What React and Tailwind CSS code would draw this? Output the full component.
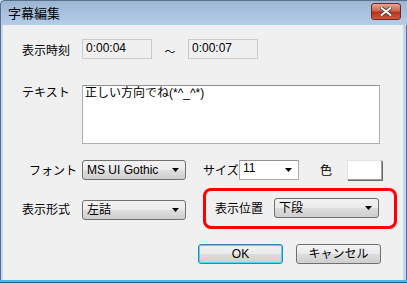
import React from 'react';

const FONT = "font-['Liberation_Sans','Noto_Sans_CJK_JP',sans-serif]";

const Arrow = () => (
  <svg width="7" height="4" viewBox="0 0 7 4" className="shrink-0">
    <path d="M0 0h7L3.5 4z" fill="#000" />
  </svg>
);

const Combo = ({ value, className = '' }) => (
  <div
    className={`flex items-center justify-between h-[20px] pl-[4px] pr-[6px] border border-[#707070] rounded-[3px] bg-[linear-gradient(#f2f2f2,#ebebeb_50%,#dddddd_50%,#cfcfcf)] ${className}`}
  >
    <span className="leading-none">{value}</span>
    <Arrow />
  </div>
);

const TimeBox = ({ value }) => (
  <div className="w-[70px] h-[20px] border border-[#c9ccd1] bg-[#f0f0f0] px-[3px] pt-[2px] leading-none">
    {value}
  </div>
);

const Button = ({ children, primary }) => (
  <button
    className={`w-[85px] h-[20px] rounded-[3px] border leading-none bg-[linear-gradient(#f2f2f2,#ebebeb_50%,#dddddd_50%,#cfcfcf)] ${
      primary ? 'border-[#3c7fb1] shadow-[inset_0_0_0_1px_#48d8fb]' : 'border-[#707070]'
    }`}
  >
    {children}
  </button>
);

export default function App() {
  return (
    <div className={`w-[407px] h-[283px] flex flex-col text-[12px] text-black ${FONT} bg-[#c2d7ef]`}>
      {/* title bar */}
      <div className="h-[25px] flex items-center justify-between pl-[7px] pr-[6px] bg-[linear-gradient(#9cb5d3,#b4cde9)] border-t border-l border-[#5b6f8a] rounded-tl-[5px]">
        <span className="text-[13px] pt-[1px]">字幕編集</span>
        <div className="w-[30px] h-[17px] mb-[3px] rounded-[3px] border border-[#6b2a26] bg-[linear-gradient(#e8a493,#d0644d_45%,#b9301b_55%,#cf5a3d)] flex items-center justify-center">
          <svg width="12" height="9" viewBox="0 0 12 9">
            <path d="M1.5 1l9 7M10.5 1l-9 7" stroke="#3b3b3b" strokeWidth="3.6" strokeLinecap="round" />
            <path d="M1.5 1l9 7M10.5 1l-9 7" stroke="#fff" strokeWidth="2" strokeLinecap="round" />
          </svg>
        </div>
      </div>

      <div className="flex flex-1">
        <div className="w-[3px] border-l border-[#5b6f8a]" />
        {/* client area */}
        <div className="flex-1 bg-[#f0f0f0] flex flex-col pl-[19px]">
          {/* row 1 */}
          <div className="mt-[14px] flex items-center h-[20px]">
            <span className="w-[60px] pt-[4px]">表示時刻</span>
            <TimeBox value="0:00:04" />
            <span className="w-[36px] text-center pt-[6px] text-[11px]">～</span>
            <TimeBox value="0:00:07" />
          </div>

          {/* row 2 */}
          <div className="mt-[26px] flex">
            <span className="w-[60px] leading-[14px] pt-[1px]">テキスト</span>
            <div className="w-[298px] h-[59px] border border-[#abadb3] border-t-[#8e9297] bg-white px-[2px] leading-[14px]">
              正しい方向でね(*^_^*)
            </div>
          </div>

          {/* row 3 */}
          <div className="mt-[15px] flex items-center h-[22px]">
            <span className="w-[60px] pl-[7px] pt-[2px]">フォント</span>
            <Combo value="MS UI Gothic" className="w-[104px]" />
            <span className="ml-[17px] w-[36px] pt-[2px]">サイズ</span>
            <div className="w-[60px] h-[20px] border border-[#abadb3] border-t-[#8e9297] bg-white flex items-start justify-between pl-[3px] pr-[6px]">
              <span className="leading-none pt-[1px]">11</span>
              <div className="self-center"><Arrow /></div>
            </div>
            <span className="ml-[21px] pt-[2px]">色</span>
            <div className="ml-[15px] w-[35px] h-[20px] bg-white border border-[#e3e3e3] border-r-[#a0a0a0] border-b-[#a0a0a0] shadow-[1px_1px_0_#696969]" />
          </div>

          {/* row 4 */}
          <div className="mt-[7px] flex items-center h-[41px]">
            <span className="w-[60px] pt-[3px]">表示形式</span>
            <Combo value="左詰" className="w-[104px] mt-[2px]" />
            <div className="ml-[17px] w-[194px] h-[41px] rounded-[8px] border-[3px] border-[#ff0000] flex items-center pl-[9px]">
              <span className="w-[59px] pt-[1px]">表示位置</span>
              <Combo value="下段" className="w-[105px] mb-[2px]" />
            </div>
          </div>

          {/* buttons */}
          <div className="mt-[15px] flex pl-[176px] gap-[13px]">
            <Button primary>OK</Button>
            <Button>キャンセル</Button>
          </div>
        </div>
        <div className="w-[4px] border-r border-[#5b6f8a]" />
      </div>
      <div className="h-[3px] bg-[#4eb4e4] border-b border-[#2e5f7e]" />
    </div>
  );
}
